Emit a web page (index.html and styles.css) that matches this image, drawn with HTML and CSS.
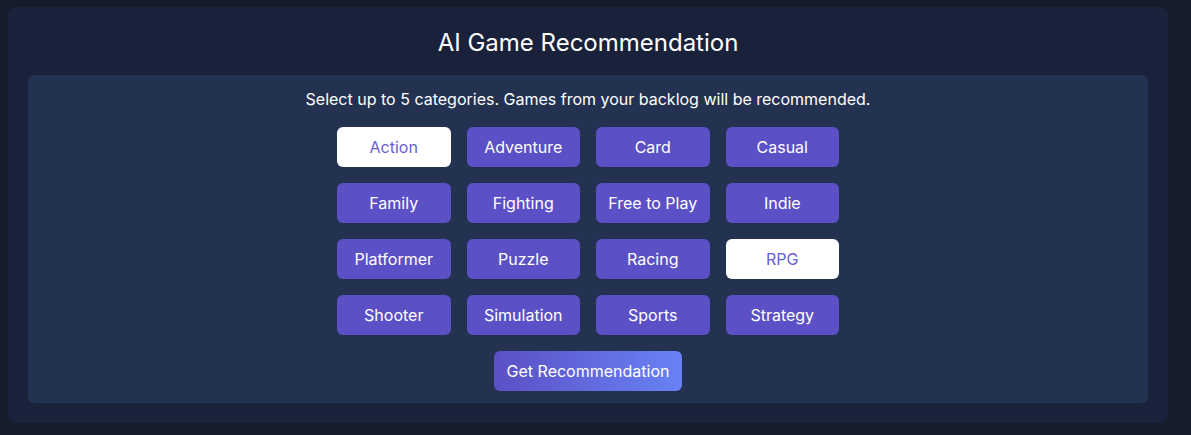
FILE: index.html
```html
<!DOCTYPE html>
<html lang="en">
<head>
<meta charset="utf-8">
<title>AI Game Recommendation</title>
<link rel="stylesheet" href="styles.css">
</head>
<body>
<div class="card">
  <h2 class="title">AI Game Recommendation</h2>
  <div class="panel">
    <p class="hint">Select up to 5 categories. Games from your backlog will be recommended.</p>
    <div class="grid">
      <button class="cat selected">Action</button>
      <button class="cat">Adventure</button>
      <button class="cat">Card</button>
      <button class="cat">Casual</button>
      <button class="cat">Family</button>
      <button class="cat">Fighting</button>
      <button class="cat">Free to Play</button>
      <button class="cat">Indie</button>
      <button class="cat">Platformer</button>
      <button class="cat">Puzzle</button>
      <button class="cat">Racing</button>
      <button class="cat selected">RPG</button>
      <button class="cat">Shooter</button>
      <button class="cat">Simulation</button>
      <button class="cat">Sports</button>
      <button class="cat">Strategy</button>
    </div>
    <button class="go">Get Recommendation</button>
  </div>
</div>
</body>
</html>
```
FILE: styles.css
```css
html, body {
  margin: 0;
  padding: 0;
  background: #171c2b;
  height: 100%;
}
body {
  font-family: Inter, "Noto Sans", sans-serif;
  color: #ffffff;
  padding: 7px 23px 12px 8px;
  box-sizing: border-box;
}
.card {
  background: #19223a;
  border-radius: 8px;
  padding: 20px 20px 20px 20px;
  display: flex;
  flex-direction: column;
  align-items: stretch;
}
.title {
  margin: 0 0 16px;
  font-size: 24px;
  line-height: 32px;
  font-weight: 400;
  text-align: center;
}
.panel {
  background: #243251;
  border-radius: 6px;
  padding: 12px 20px 12px;
  display: flex;
  flex-direction: column;
  align-items: center;
}
.hint {
  margin: 0 0 16px;
  font-size: 16px;
  line-height: 24px;
}
.grid {
  display: grid;
  grid-template-columns: repeat(4, 113.5px);
  gap: 16px;
  margin-bottom: 16px;
}
.cat {
  height: 40px;
  border: none;
  border-radius: 6px;
  background: #5b50c5;
  color: #ffffff;
  font-family: Inter, "Noto Sans", sans-serif;
  font-size: 16px;
  font-weight: 400;
  padding: 0;
  cursor: pointer;
}
.cat.selected {
  background: #ffffff;
  color: #6a5dd6;
}
.go {
  height: 40px;
  width: 188px;
  border: none;
  border-radius: 6px;
  background: linear-gradient(90deg, #5b50c5, #6882f5);
  color: #ffffff;
  font-family: Inter, "Noto Sans", sans-serif;
  font-size: 16px;
  font-weight: 400;
  cursor: pointer;
}
```
